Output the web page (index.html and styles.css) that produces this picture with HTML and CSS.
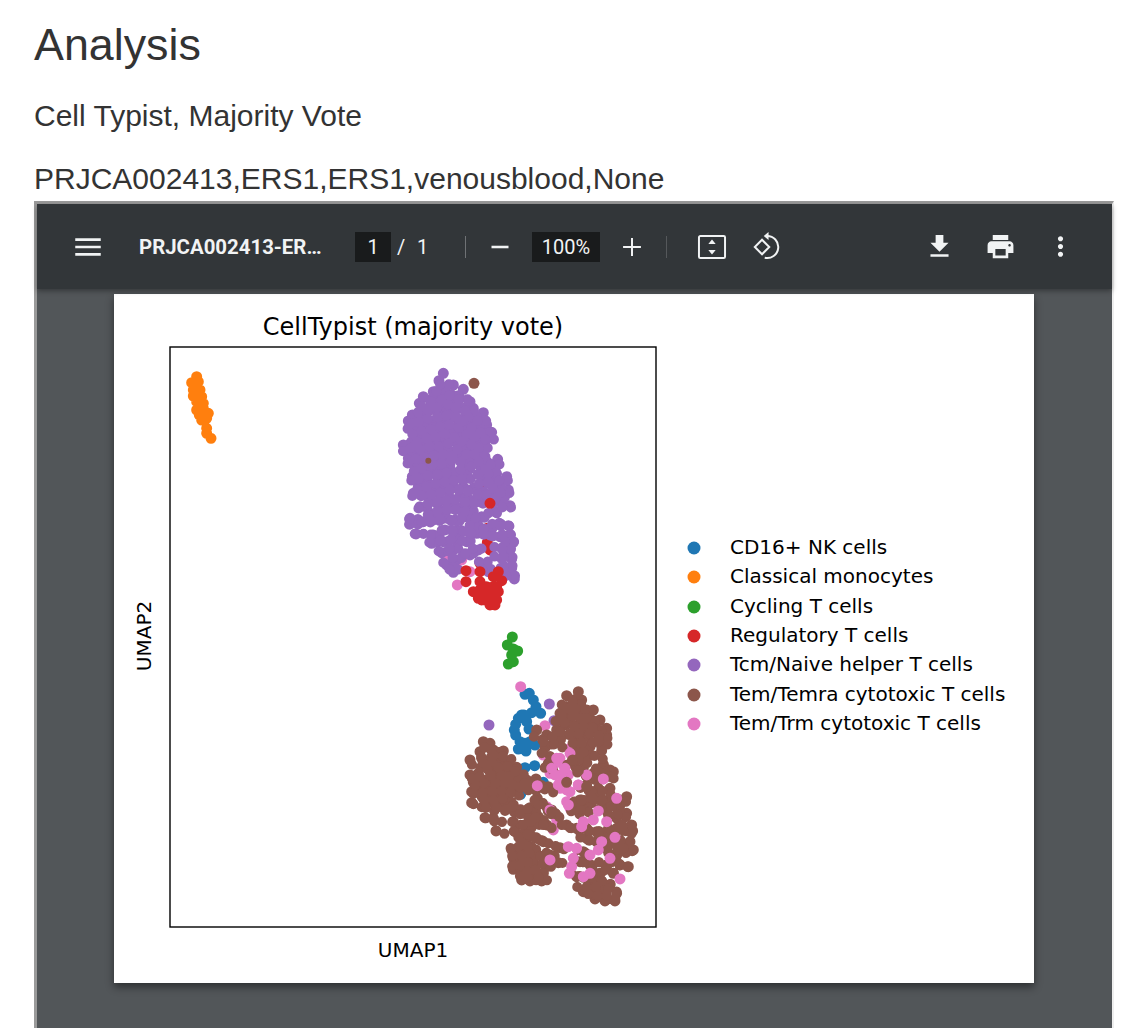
FILE: index.html
```html
<!DOCTYPE html>
<html lang="en">
<head>
    <meta charset="UTF-8">
    <title>Analysis</title>
    <link rel="stylesheet" href="styles.css">
</head>
<body>
    <h1 class="title">Analysis</h1>
    <p class="subtitle">Cell Typist, Majority Vote</p>
    <p class="sample">PRJCA002413,ERS1,ERS1,venousblood,None</p>

    <div class="viewer">
        <div class="toolbar">
            <svg class="icon menu-icon" viewBox="0 0 24 24"><path d="M3 18.200h18v-1.900H3zm0-5.250h18v-1.900H3zM3 5.800v1.900h18V5.800z"/></svg>
            <span class="file-name">PRJCA002413-ER…</span>
            <span class="page-input">1</span>
            <span class="page-slash">/</span>
            <span class="page-total">1</span>
            <span class="separator first"></span>
            <svg class="icon zoom-out" viewBox="0 0 24 24"><path d="M6 12.900h12v-1.800H6z"/></svg>
            <span class="zoom-input">100%</span>
            <svg class="icon zoom-in" viewBox="0 0 24 24"><path d="M18.300 12.700h-5.600v5.600h-1.400v-5.600H5.700v-1.400h5.600V5.700h1.400v5.600h5.600z"/></svg>
            <span class="separator second"></span>
            <svg class="icon fit" viewBox="0 0 24 24">
                <rect x="2.800" y="4.200" width="18.400" height="15.600" rx="1" fill="none" stroke="#f1f3f4" stroke-width="1.400"/>
                <path d="M12 6.700l2.600 3.200H9.400zM12 17.300l-2.600-3.200h5.200z"/>
            </svg>
            <svg class="icon rotate" viewBox="0 0 24 24">
                <path d="M9.200 6.900l5.100 5.100-5.100 5.100L4.100 12z" fill="none" stroke="#f1f3f4" stroke-width="1.400"/>
                <path d="M12.700 4.200a7.800 7.800 0 1 1-1.600 15.400" fill="none" stroke="#f1f3f4" stroke-width="1.400"/>
                <path d="M13.800 1.400v5.600l-3.400-2.800z"/>
            </svg>
            <svg class="icon action download" viewBox="0 0 24 24"><path d="M19 9h-4V3H9v6H5l7 7 7-7zM5 18v2h14v-2H5z"/></svg>
            <svg class="icon action print" viewBox="0 0 24 24"><path d="M19 8H5c-1.660 0-3 1.340-3 3v6h4v4h12v-4h4v-6c0-1.660-1.340-3-3-3zm-3 11H8v-5h8v5zm3-7c-.55 0-1-.45-1-1s.45-1 1-1 1 .45 1 1-.45 1-1 1zm-1-9H6v4h12V3z"/></svg>
            <svg class="icon action more" viewBox="0 0 24 24"><path d="M12 8c1.100 0 2-.9 2-2s-.9-2-2-2-2 .9-2 2 .9 2 2 2zm0 2c-1.100 0-2 .9-2 2s.9 2 2 2 2-.9 2-2-.9-2-2-2zm0 6c-1.100 0-2 .9-2 2s.9 2 2 2 2-.9 2-2-.9-2-2-2z"/></svg>
        </div>

        <div class="pdf-area">
            <div class="pdf-page">
                <svg class="plot" viewBox="114 294 920 689" width="920" height="689">
                    <text class="plot-title" x="413" y="335">CellTypist (majority vote)</text>

                    <!-- orange -->
                    <g transform="translate(160 340) scale(.3333)">
                        <path class="dots orange" d="M110 110h0M95 128h0M115 125h0M100 150h0M120 150h0M100 168h0M125 170h0M130 190h0M110 210h0M130 205h0M145 220h0M125 240h0M140 235h0M140 265h0M140 280h0M153 295h0M110 185h0M118 225h0"/>
                    </g>

                    <!-- upper cluster -->
                    <g transform="translate(380 360) scale(.3333)">
                        <path class="dots pink" d="M203 598h0M245 600h0M270 635h0M232 675h0"/>
                        <path class="dots brown" d="M282 70h0"/>
                        <path class="dots red" d="M303 375h0M322 505h0M322 547h0M330 570h0M300 610h0"/>
                        <path id="purple-top" class="dots purple" d="M190 40h0M177 62h0M220 75h0M250 88h0M160 95h0M195 90h0M130 110h0M118 130h0M150 120h0M180 115h0M215 105h0M240 115h0M270 125h0M280 145h0M310 158h0M97 165h0M85 183h0M120 160h0M150 150h0M180 145h0M210 140h0M240 145h0M260 160h0M290 180h0M320 195h0M335 217h0M100 200h0M130 190h0M160 185h0M190 175h0M220 170h0M250 180h0M275 200h0M300 210h0M115 225h0M145 215h0M175 210h0M205 200h0M235 210h0M260 225h0M290 235h0M315 245h0M70 255h0M95 245h0M125 250h0M155 240h0M185 240h0M215 230h0M245 250h0M275 265h0M300 265h0M315 290h0M85 295h0M110 280h0M140 275h0M170 270h0M200 265h0M230 270h0M255 290h0M353 298h0M105 320h0M130 310h0M165 300h0M195 295h0M225 285h0M290 305h0M335 315h0M345 328h0M97 350h0M120 345h0M150 335h0M180 330h0M210 325h0M255 315h0M310 330h0M380 350h0M115 380h0M145 370h0M175 360h0M205 355h0M235 350h0M260 345h0M315 360h0M345 355h0M360 375h0M385 390h0M100 400h0M130 400h0M160 395h0M190 390h0M220 380h0M250 380h0M280 385h0M310 395h0M340 400h0M370 405h0M120 440h0M150 425h0M180 420h0M210 415h0M240 410h0M270 420h0M300 425h0M360 425h0M390 437h0M345 455h0M90 475h0M150 460h0M180 450h0M210 445h0M240 445h0M270 450h0M305 470h0M90 492h0M130 485h0M160 480h0M190 475h0M225 480h0M260 470h0M285 495h0M358 490h0M385 497h0M330 505h0M108 522h0M160 525h0M195 510h0M230 510h0M265 515h0M290 520h0M330 525h0M390 525h0M360 530h0M155 550h0M190 545h0M225 540h0M260 545h0M400 547h0M365 565h0M185 578h0M220 570h0M270 585h0M295 570h0M390 570h0M365 595h0M395 597h0M230 600h0M200 615h0M220 637h0M315 612h0M325 635h0M395 625h0M385 632h0M403 657h0"/>
                        <use href="#purple-top" transform="matrix(.93 0 0 .93 30 36)"/>
                        <use href="#purple-top" transform="matrix(.93 0 0 .93 4 36)"/>
                        <path class="dots brown small" d="M145 302h0"/>
                        <path class="dots red" d="M330 430h0M258 632h0M300 635h0M355 635h0M340 650h0M258 665h0M365 662h0M300 665h0M320 680h0M280 695h0M295 715h0M350 680h0M310 700h0M340 700h0M355 695h0M330 720h0M350 720h0M330 735h0M315 720h0M300 690h0M325 700h0M340 680h0M305 720h0M345 735h0"/>
                    </g>

                    <!-- lower cluster -->
                    <g transform="translate(450 625) scale(.3333)">
                        <path class="dots green" d="M187 36h0M172 60h0M190 72h0M203 78h0M185 90h0M190 110h0M175 117h0"/>
                        <path class="dots blue" d="M238 205h0M225 208h0M250 225h0M258 245h0M245 263h0M272 265h0M215 270h0M197 298h0M230 290h0M205 280h0M237 312h0M197 330h0M210 350h0M240 350h0M255 360h0M205 372h0M228 378h0M225 428h0M254 422h0M280 472h0M212 508h0M193 315h0M222 270h0M225 355h0"/>
                        <path class="dots purple" d="M298 237h0M117 300h0M312 287h0"/>
                        <path class="dots pink" d="M212 185h0M285 302h0M280 390h0M330 400h0M360 370h0M310 420h0M340 420h0M300 445h0M330 450h0M355 450h0M330 490h0M360 500h0M385 480h0M410 450h0M460 462h0M350 530h0M360 550h0M290 545h0M320 585h0M210 555h0M310 615h0"/>
                        <path id="brown-low" class="dots brown" d="M100 350h0M120 355h0M90 380h0M130 375h0M160 378h0M95 400h0M125 395h0M60 405h0M110 420h0M145 415h0M175 410h0M200 427h0M60 450h0M85 445h0M120 440h0M155 440h0M180 445h0M70 472h0M100 465h0M135 465h0M165 465h0M190 470h0M65 500h0M95 495h0M125 490h0M155 490h0M185 495h0M65 533h0M100 520h0M130 520h0M160 515h0M190 540h0M105 545h0M140 545h0M170 550h0M105 578h0M130 580h0M138 618h0M190 590h0M195 620h0M225 600h0M215 565h0M240 548h0M210 640h0M240 630h0M225 660h0M260 640h0M280 650h0M185 675h0M210 670h0M240 670h0M190 700h0M220 700h0M245 690h0M190 733h0M215 730h0M240 720h0M215 765h0M240 750h0M265 745h0M240 768h0M275 768h0M230 465h0M258 462h0M215 478h0M240 480h0M295 485h0M262 520h0M275 535h0M305 555h0M315 565h0M265 575h0M290 600h0M250 590h0M300 690h0M280 700h0M325 713h0M288 725h0M330 668h0M385 200h0M350 212h0M370 225h0M395 225h0M350 245h0M385 250h0M410 255h0M430 255h0M330 265h0M360 270h0M390 280h0M420 280h0M450 285h0M320 315h0M260 315h0M290 330h0M345 300h0M375 305h0M405 305h0M440 305h0M470 310h0M325 340h0M385 335h0M415 335h0M450 335h0M470 330h0M285 368h0M390 365h0M420 365h0M455 377h0M405 390h0M295 415h0M368 405h0M460 418h0M480 435h0M490 440h0M400 430h0M430 445h0M410 480h0M445 490h0M480 490h0M530 515h0M390 525h0M420 520h0M450 515h0M480 520h0M510 540h0M380 555h0M410 550h0M470 550h0M500 570h0M530 565h0M545 600h0M350 600h0M380 610h0M410 610h0M440 620h0M470 620h0M500 610h0M530 610h0M548 618h0M410 640h0M440 650h0M480 650h0M510 660h0M540 650h0M550 675h0M400 680h0M390 710h0M420 720h0M470 670h0M500 690h0M530 680h0M535 725h0M510 720h0M470 720h0M490 745h0M450 745h0M380 755h0M420 770h0M450 770h0M480 780h0M400 800h0M430 800h0M460 800h0M500 805h0M435 822h0M465 828h0M495 828h0"/>
                        <use href="#brown-low" transform="matrix(.93 0 0 .93 35 51)"/>
                        <use href="#brown-low" transform="matrix(.93 0 0 .93 10 42)"/>
                        <path class="dots pink" d="M262 482h0M320 400h0M345 430h0M315 450h0M340 460h0M325 480h0M350 495h0M305 430h0M360 385h0M355 540h0M300 555h0M445 558h0M430 585h0M470 590h0M400 590h0M495 637h0M455 650h0M420 690h0M445 675h0M380 670h0M355 665h0M370 700h0M365 725h0M358 745h0M400 755h0M420 745h0M510 762h0M300 705h0M480 700h0M500 520h0M395 605h0M410 450h0M385 480h0M460 462h0"/>
                        <path class="dots brown" d="M368 405h0M385 437h0M350 472h0M410 485h0M305 560h0M395 525h0"/>
                    </g>

                    <rect class="axes" x="170" y="347" width="486" height="580"/>
                    <text class="axis-label" x="413" y="957">UMAP1</text>
                    <text class="axis-label" transform="translate(151 636) rotate(-90)">UMAP2</text>

                    <g class="legend">
                        <circle cx="694" cy="548" r="6.500" fill="#1f77b4"/><text x="730" y="554">CD16+ NK cells</text>
                        <circle cx="694" cy="577" r="6.500" fill="#ff7f0e"/><text x="730" y="583">Classical monocytes</text>
                        <circle cx="694" cy="607" r="6.500" fill="#2ca02c"/><text x="730" y="613">Cycling T cells</text>
                        <circle cx="694" cy="636" r="6.500" fill="#d62728"/><text x="730" y="642">Regulatory T cells</text>
                        <circle cx="694" cy="665" r="6.500" fill="#9467bd"/><text x="730" y="671">Tcm/Naive helper T cells</text>
                        <circle cx="694" cy="695" r="6.500" fill="#8c564b"/><text x="730" y="701">Tem/Temra cytotoxic T cells</text>
                        <circle cx="694" cy="724" r="6.500" fill="#e377c2"/><text x="730" y="730">Tem/Trm cytotoxic T cells</text>
                    </g>
                </svg>
            </div>
        </div>
    </div>
</body>
</html>
```

FILE: styles.css
```css
html, body {
    height: 1028px;
    overflow: hidden;
}
body {
    margin: 0;
    padding: 0 17px 0 34px;
    font-family: "Liberation Sans", Arial, sans-serif;
    color: #333;
    background-color: white;
}
.title {
    margin: 0;
    padding-top: 18px;
    font-size: 44.800px;
    font-weight: normal;
    line-height: 52px;
}
.subtitle {
    margin: 0;
    padding-top: 30px;
    font-size: 30px;
    line-height: 32px;
}
.sample {
    margin: 0;
    padding-top: 31px;
    font-size: 30px;
    line-height: 32px;
}
.viewer {
    margin-top: 6px;
    height: 900px;
    border-style: solid;
    border-width: 3px 2px 3px 3px;
    border-color: #9a9a9a #eeeeee #eeeeee #9a9a9a;
    background-color: #525659;
}
.toolbar {
    position: relative;
    display: flex;
    align-items: center;
    height: 85px;
    background-color: #323639;
    color: #f1f3f4;
    font-family: Roboto, sans-serif;
    font-size: 20px;
    box-shadow: 0 2px 5px rgba(0,0,0,0.35);
}
.icon {
    flex: none;
    width: 34px;
    height: 34px;
    fill: #f1f3f4;
}
.icon.action {
    width: 31px;
    height: 31px;
}
.menu-icon { margin-left: 34px; }
.file-name {
    margin-left: 34px;
    width: 216px;
    font-weight: 700;
    font-size: 20.400px;
    white-space: nowrap;
}
.page-input, .zoom-input {
    background-color: #191b1c;
    height: 30px;
    line-height: 30px;
    text-align: center;
}
.page-input { width: 36px; }
.page-slash { margin-left: 6px; width: 20px; }
.page-total { width: 48px; }
.separator {
    flex: none;
    width: 1px;
    height: 22px;
    background-color: #6f7275;
}
.zoom-out { margin-left: 17px; }
.zoom-input { width: 68px; margin-left: 15px; }
.zoom-in { margin-left: 15px; }
.separator.second { margin-left: 17px; background-color: #55585b; }
.fit { margin-left: 28px; }
.rotate { margin-left: 20px; }
.download { margin-left: 141px; }
.print { margin-left: 30px; }
.more { margin-left: 29px; }
.pdf-area {
    padding-top: 5px;
}
.pdf-page {
    width: 920px;
    height: 689px;
    margin-left: 77px;
    background-color: white;
    box-shadow: 0 4px 8px rgba(0,0,0,0.45);
}
.plot {
    display: block;
}
.plot text {
    font-family: "DejaVu Sans", sans-serif;
    fill: #000;
}
.plot-title {
    font-size: 24px;
    text-anchor: middle;
}
.axis-label {
    font-size: 20px;
    text-anchor: middle;
}
.legend text {
    font-size: 20px;
}
.axes {
    fill: none;
    stroke: #000;
    stroke-width: 1.400;
}
.dots {
    fill: none;
    stroke-width: 33;
    stroke-linecap: round;
}
.dots.small { stroke-width: 18; }
.orange { stroke: #ff7f0e; }
.purple { stroke: #9467bd; }
.red { stroke: #d62728; }
.pink { stroke: #e377c2; }
.brown { stroke: #8c564b; }
.green { stroke: #2ca02c; }
.blue { stroke: #1f77b4; }
```
